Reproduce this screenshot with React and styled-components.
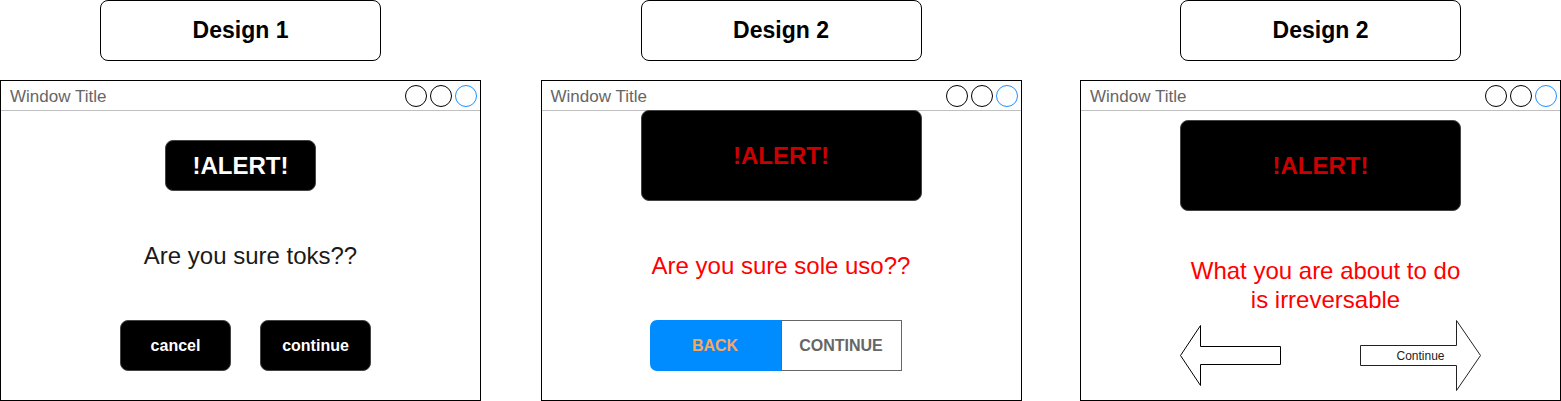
import React from "react";
import styled, { createGlobalStyle } from "styled-components";

const GlobalStyle = createGlobalStyle`
  html, body {
    margin: 0;
    padding: 0;
    background: #ffffff;
    font-family: "Liberation Sans", Arial, sans-serif;
  }
`;

const Page = styled.div`
  width: 1561px;
  height: 401px;
  display: flex;
  justify-content: space-between;
  align-items: flex-start;
`;

const Column = styled.div`
  width: 481px;
  display: flex;
  flex-direction: column;
  align-items: center;
  margin-left: ${(p) => p.$shift || 0}px;
`;

const DesignLabel = styled.div`
  width: 279px;
  height: 59px;
  border: 1px solid #000;
  border-radius: 8px;
  display: flex;
  align-items: center;
  justify-content: center;
  font-size: 23px;
  font-weight: bold;
  color: #000;
  margin-bottom: 19px;
`;

const Window = styled.div`
  box-sizing: border-box;
  width: 481px;
  height: 321px;
  border: 1px solid #000;
  display: flex;
  flex-direction: column;
`;

const TitleBar = styled.div`
  height: 29px;
  flex: none;
  border-bottom: 1px solid #c0c0c0;
  display: flex;
  align-items: center;
  justify-content: space-between;
  padding: 0 3px 0 9px;
`;

const Title = styled.span`
  font-size: 17px;
  color: #666;
  margin-top: 3px;
`;

const Controls = styled.div`
  display: flex;
  gap: 3px;
  margin-top: 1px;
`;

const Dot = styled.span`
  box-sizing: border-box;
  width: 22px;
  height: 22px;
  border-radius: 50%;
  border: 1px solid ${(p) => (p.$blue ? "#1e90ff" : "#000")};
`;

const Body = styled.div`
  display: flex;
  flex-direction: column;
  align-items: center;
`;

const AlertBox = styled.div`
  box-sizing: border-box;
  width: ${(p) => p.$w}px;
  height: ${(p) => p.$h}px;
  margin-top: ${(p) => p.$top}px;
  background: #000;
  border: 1px solid #444;
  border-radius: 8px;
  display: flex;
  align-items: center;
  justify-content: center;
  font-size: 24px;
  font-weight: bold;
  color: ${(p) => (p.$red ? "#cc0000" : "#fff")};
`;

const Message = styled.div`
  font-size: 24px;
  line-height: ${(p) => p.$lh || 28}px;
  text-align: center;
  color: ${(p) => (p.$red ? "#ff0000" : "#1a1a1a")};
  margin-top: ${(p) => p.$top}px;
  margin-left: ${(p) => p.$shift || 0}px;
`;

const ButtonRow = styled.div`
  display: flex;
  gap: 29px;
  margin-top: 50px;
  margin-left: 10px;
`;

const BlackButton = styled.div`
  box-sizing: border-box;
  width: 111px;
  height: 51px;
  background: #000;
  border: 1px solid #444;
  border-radius: 8px;
  display: flex;
  align-items: center;
  justify-content: center;
  color: #fff;
  font-size: 16px;
  font-weight: bold;
`;

const Segmented = styled.div`
  display: flex;
  height: 51px;
  margin-top: 40px;
  margin-left: -11px;
`;

const Segment = styled.div`
  box-sizing: border-box;
  width: ${(p) => p.$w}px;
  display: flex;
  align-items: center;
  justify-content: center;
  font-size: 16px;
  font-weight: bold;
  background: ${(p) => (p.$active ? "#008cff" : "#fff")};
  color: ${(p) => (p.$active ? "#f5a860" : "#666")};
  border: ${(p) => (p.$active ? "none" : "1px solid #666")};
  border-radius: ${(p) => (p.$active ? "7px 0 0 7px" : "0")};
`;

const ArrowRow = styled.div`
  align-self: stretch;
  display: flex;
  align-items: center;
  gap: 79px;
  padding-left: 99px;
  margin-top: 6px;
`;

const ArrowShape = styled.div`
  position: relative;
  display: flex;
  svg {
    display: block;
  }
`;

const ArrowLabel = styled.span`
  position: absolute;
  left: 0;
  right: 0;
  top: 50%;
  transform: translateY(-50%);
  text-align: center;
  font-size: 12px;
  color: #222;
`;

const LeftArrow = () => (
  <ArrowShape>
    <svg width="101" height="62" viewBox="0 0 101 62">
      <polygon
        points="0.5,30.5 20.5,0.5 20.5,21.5 100.5,21.5 100.5,39.5 20.5,39.5 20.5,60.5"
        fill="#fff"
        stroke="#000"
        strokeWidth="1"
      />
    </svg>
  </ArrowShape>
);

const RightArrow = ({ label }) => (
  <ArrowShape>
    <svg width="121" height="71" viewBox="0 0 121 71">
      <polygon
        points="0.5,25.5 96.5,25.5 96.5,0.5 120.5,35.5 96.5,70.5 96.5,45.5 0.5,45.5"
        fill="#fff"
        stroke="#222"
        strokeWidth="1"
      />
    </svg>
    <ArrowLabel>{label}</ArrowLabel>
  </ArrowShape>
);

const WindowFrame = ({ children }) => (
  <Window>
    <TitleBar>
      <Title>Window Title</Title>
      <Controls>
        <Dot />
        <Dot />
        <Dot $blue />
      </Controls>
    </TitleBar>
    <Body>{children}</Body>
  </Window>
);

export default function App() {
  return (
    <>
      <GlobalStyle />
      <Page>
        <Column>
          <DesignLabel>Design 1</DesignLabel>
          <WindowFrame>
            <AlertBox $w={151} $h={51} $top={29}>
              !ALERT!
            </AlertBox>
            <Message $top={51} $shift={20}>
              Are you sure toks??
            </Message>
            <ButtonRow>
              <BlackButton>cancel</BlackButton>
              <BlackButton>continue</BlackButton>
            </ButtonRow>
          </WindowFrame>
        </Column>

        <Column $shift={1}>
          <DesignLabel>Design 2</DesignLabel>
          <WindowFrame>
            <AlertBox $w={281} $h={91} $top={-1} $red>
              !ALERT!
            </AlertBox>
            <Message $top={51} $red>
              Are you sure sole uso??
            </Message>
            <Segmented>
              <Segment $w={131} $active>
                BACK
              </Segment>
              <Segment $w={121}>CONTINUE</Segment>
            </Segmented>
          </WindowFrame>
        </Column>

        <Column>
          <DesignLabel>Design 2</DesignLabel>
          <WindowFrame>
            <AlertBox $w={281} $h={91} $top={9} $red>
              !ALERT!
            </AlertBox>
            <Message $top={45} $lh={29} $shift={10} $red>
              What you are about to do
              <br />
              is irreversable
            </Message>
            <ArrowRow>
              <LeftArrow />
              <RightArrow label="Continue" />
            </ArrowRow>
          </WindowFrame>
        </Column>
      </Page>
    </>
  );
}
